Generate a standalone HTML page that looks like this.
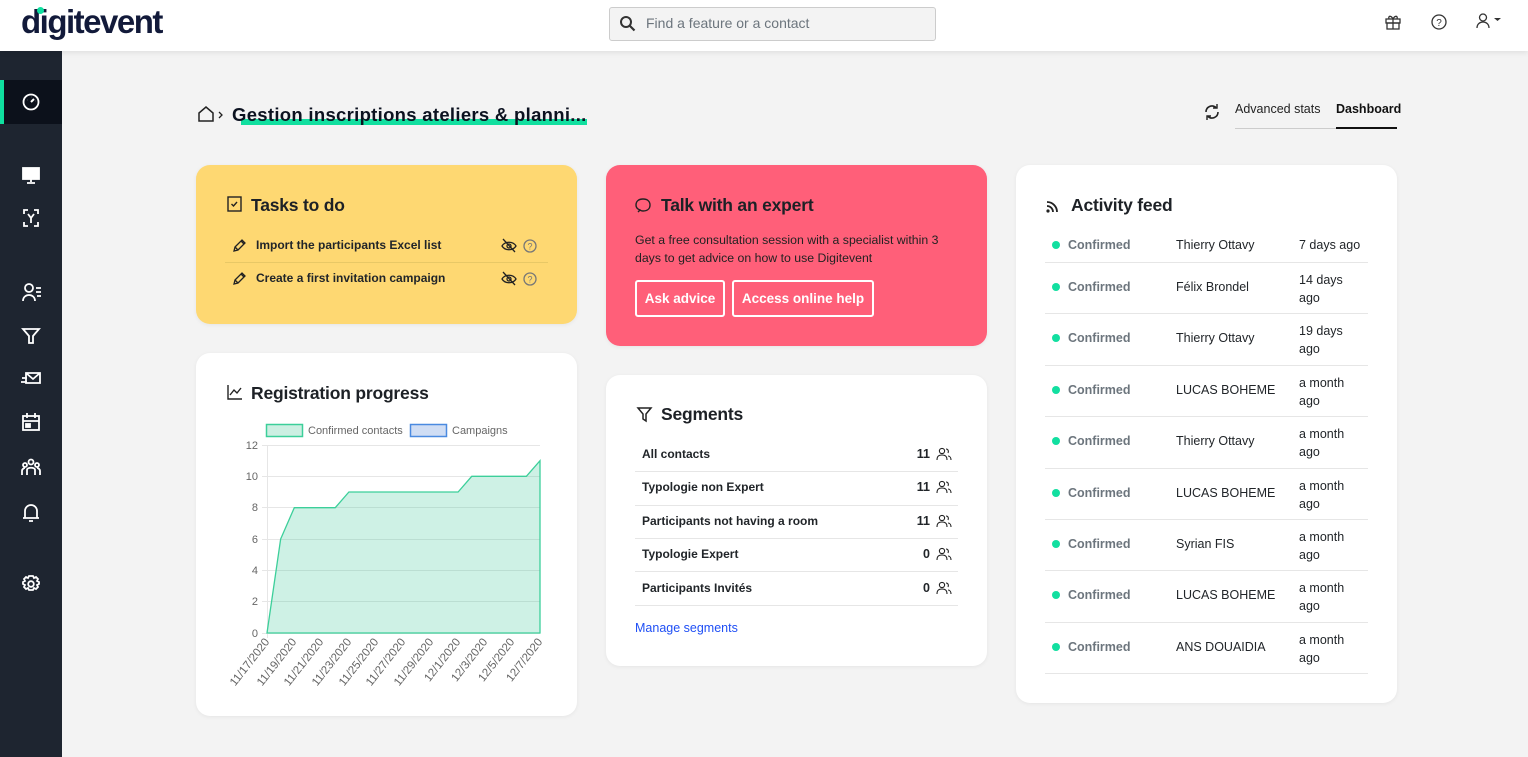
<!DOCTYPE html>
<html><head><meta charset="utf-8"><style>
*{box-sizing:border-box;margin:0;padding:0}
body{width:1528px;height:757px;background:#f3f3f3;font-family:"Liberation Sans",sans-serif;color:#212529;position:relative;overflow:hidden}
.a{position:absolute}
.top{left:0;top:0;width:1528px;height:51px;background:#fff;box-shadow:0 2px 5px rgba(0,0,0,.08);z-index:2}
.side{left:0;top:51px;width:62px;height:706px;background:#1e2530}
.card{position:absolute;border-radius:14px;background:#fff;box-shadow:0 1px 4px rgba(0,0,0,.06)}
h3{position:absolute;font-size:17.5px;font-weight:bold;color:#1d2126;letter-spacing:-0.2px}
.si{stroke:#fff;fill:none;stroke-width:1.8}
.row{position:absolute;font-size:12.5px;font-weight:bold}
.sep{position:absolute;height:1px;background:#e6e6e6}
.btn{position:absolute;border:2px solid #fff;border-radius:3px;color:#fff;font-weight:bold;font-size:13.5px;text-align:center;line-height:33px;height:37px}
.af{position:absolute;font-size:12.5px}
</style></head><body>
<div class="a top">
 <div class="a" style="left:21px;top:3px;font-size:33px;font-weight:bold;color:#121a3a;letter-spacing:-1.5px">digitevent</div>
 <div class="a" style="left:37px;top:7px;width:7px;height:7px;border-radius:4px;background:#0fe0a0"></div>
 <div class="a" style="left:609px;top:7px;width:327px;height:34px;border:1px solid #ccc;border-radius:3px;background:#f3f3f3"></div>
 <svg class="a" style="left:619px;top:15px" width="18" height="18"><circle cx="7" cy="7" r="5" stroke="#333" stroke-width="2" fill="none"/><path d="M11 11l4.5 4.5" stroke="#333" stroke-width="2.2"/></svg>
 <div class="a" style="left:646px;top:15px;font-size:14px;color:#6c757d">Find a feature or a contact</div>
 <svg class="a" style="left:1384px;top:13px" width="18" height="18"><g stroke="#333" fill="none" stroke-width="1.3"><rect x="2" y="6" width="14" height="4"/><rect x="3" y="10" width="12" height="6"/><path d="M9 6v10M9 6C7 2 4 3 5 5.5M9 6c2-4 5-3 4-0.5"/></g></svg>
 <svg class="a" style="left:1430px;top:13px" width="18" height="18"><circle cx="9" cy="9" r="7" stroke="#333" stroke-width="1.3" fill="none"/><text x="9" y="13" font-size="10" text-anchor="middle" fill="#333" font-family="Liberation Sans">?</text></svg>
 <svg class="a" style="left:1474px;top:12px" width="30" height="18"><g stroke="#333" fill="none" stroke-width="1.3"><circle cx="9" cy="5.5" r="3.5"/><path d="M3 16c0-4 3-6 6-6s6 2 6 6"/></g><path d="M20 6h7l-3.5 3z" fill="#333"/></svg>
</div>
<div class="a side"></div>
<div class="a" style="left:0;top:80px;width:62px;height:44px;background:#0c111b"></div>
<div class="a" style="left:0;top:80px;width:4px;height:44px;background:#0fe0a0"></div>
<svg class="a" style="left:0;top:51px" width="62" height="706">
 <g class="si"><circle cx="31" cy="51" r="7.5"/><path d="M31 51l3-3M27 49h0.1M31 46h0.1M35 50h0.1" stroke-width="2"/>
 <rect x="23" y="117" width="16" height="11" fill="#fff"/><path d="M31 128v3M27 132h8"/>
 <path d="M24 163v-4h4M34 159h4v4M24 171v4h4M34 175h4v-4M28 163l3 4 3-4M31 167v5"/>
 <circle cx="29" cy="237" r="4"/><path d="M23 250c0-4 3-6 6-6s6 2 6 6M36 237h5M36 241h5M37 245h4"/>
 <path d="M23 278h16l-6 7v7h-4v-7z"/>
 <path d="M26 322h14v10H26zM26 322l7 6 7-6M22 327h5M21 331h6"/>
 <rect x="23" y="365" width="16" height="14"/><path d="M23 370h16M27 362v5M35 362v5"/><rect x="26" y="373" width="4" height="3" fill="#fff"/>
 <circle cx="31" cy="411" r="2.5"/><circle cx="25" cy="414" r="2"/><circle cx="37" cy="414" r="2"/><path d="M27 424v-5c0-3 8-3 8 0v5M22 424v-4c0-2 2-3 3-3M40 424v-4c0-2-2-3-3-3"/>
 <path d="M25 467v-7a6 6 0 0112 0v7zM23 467h16M29 470h4"/>
 <circle cx="31" cy="533" r="2.8"/><path d="M31 525l2 0 1 2 2-1 2 2-1 2 2 1v2l-2 1 1 2-2 2-2-1-1 2h-4l-1-2-2 1-2-2 1-2-2-1v-2l2-1-1-2 2-2 2 1 1-2z"/></g>
</svg>

<svg class="a" style="left:197px;top:105px" width="30" height="18"><path d="M2 16V8l7-6 7 6v8z" stroke="#222" stroke-width="1.5" fill="none"/><path d="M22 7l3 3-3 3" stroke="#222" stroke-width="1.3" fill="none"/></svg>
<div class="a" style="left:241px;top:119px;width:346px;height:6px;background:#11df9f"></div>
<div class="a" style="left:232px;top:104px;font-size:18.5px;font-weight:bold;color:#0c1220;letter-spacing:0.3px">Gestion inscriptions ateliers &amp; planni...</div>
<svg class="a" style="left:1203px;top:103px" width="18" height="18"><path d="M3 9a6 6 0 0110-4.5M15 9a6 6 0 01-10 4.5" stroke="#222" stroke-width="1.6" fill="none"/><path d="M14 1v4h-4M4 17v-4h4" stroke="#222" stroke-width="1.4" fill="none"/></svg>
<div class="a" style="left:1235px;top:102px;font-size:12.5px;color:#222">Advanced stats</div>
<div class="a" style="left:1336px;top:102px;font-size:12.5px;font-weight:bold;color:#111">Dashboard</div>
<div class="a" style="left:1235px;top:128px;width:101px;height:1px;background:#ccc"></div>
<div class="a" style="left:1336px;top:127px;width:61px;height:2px;background:#111"></div>

<div class="card" style="left:196px;top:165px;width:381px;height:159px;background:#fed872"></div>
<svg class="a" style="left:226px;top:195px" width="18" height="18"><rect x="2" y="2" width="13" height="14" stroke="#222" stroke-width="1.4" fill="none"/><path d="M5.5 9l2 2 3.5-4" stroke="#222" stroke-width="1.4" fill="none"/></svg>
<h3 style="left:251px;top:195px">Tasks to do</h3>
<svg class="a" style="left:232px;top:237px" width="16" height="16"><path d="M2 14l1-4 7-7 3 3-7 7zM9 4l3 3M3 10l3 3" stroke="#222" stroke-width="1.3" fill="none"/></svg>
<div class="row" style="left:256px;top:238px;font-size:12px">Import the participants Excel list</div>
<div class="sep" style="left:225px;top:262px;width:323px;background:#e8c866"></div>
<svg class="a" style="left:232px;top:270px" width="16" height="16"><path d="M2 14l1-4 7-7 3 3-7 7zM9 4l3 3M3 10l3 3" stroke="#222" stroke-width="1.3" fill="none"/></svg>
<div class="row" style="left:256px;top:271px;font-size:12px">Create a first invitation campaign</div>
<svg class="a" style="left:500px;top:237px" width="44" height="50"><g fill="none" stroke-width="1.3"><path d="M2 9c3-5 11-5 14 0-3 5-11 5-14 0zM3 2l12 13" stroke="#222"/><circle cx="9" cy="9" r="2" stroke="#222"/><circle cx="30" cy="9" r="6" stroke="#777"/>
<path d="M2 42c3-5 11-5 14 0-3 5-11 5-14 0zM3 35l12 13" stroke="#222"/><circle cx="9" cy="42" r="2" stroke="#222"/><circle cx="30" cy="42" r="6" stroke="#777"/></g>
<text x="30" y="12.5" font-size="9" text-anchor="middle" fill="#777" font-family="Liberation Sans">?</text><text x="30" y="45.5" font-size="9" text-anchor="middle" fill="#777" font-family="Liberation Sans">?</text></svg>

<div class="card" style="left:606px;top:165px;width:381px;height:181px;background:#ff5f79"></div>
<svg class="a" style="left:635px;top:196px" width="18" height="18"><path d="M5 14c-3-1-4-3-4-5 0-4 3-6 7-6s7 2 7 6-3 6-7 6c-1 0-2 0-3-1l-2 2z" stroke="#222" stroke-width="1.4" fill="none"/></svg>
<h3 style="left:661px;top:195px">Talk with an expert</h3>
<div class="a" style="left:635px;top:231px;font-size:12.3px;line-height:18px;color:#222;width:325px">Get a free consultation session with a specialist within 3 days to get advice on how to use Digitevent</div>
<div class="btn" style="left:635px;top:280px;width:90px">Ask advice</div>
<div class="btn" style="left:732px;top:280px;width:142px">Access online help</div>

<div class="card" style="left:606px;top:375px;width:381px;height:291px"></div>
<svg class="a" style="left:636px;top:405px" width="18" height="18"><path d="M2 3h13l-5 6v7l-3-2V9z" stroke="#222" stroke-width="1.5" fill="none"/></svg>
<h3 style="left:661px;top:404px">Segments</h3>
<div class="row" style="left:642px;top:447px;font-size:12px">All contacts</div>
<div class="row" style="left:642px;top:480px;font-size:12px">Typologie non Expert</div>
<div class="row" style="left:642px;top:514px;font-size:12px">Participants not having a room</div>
<div class="row" style="left:642px;top:547px;font-size:12px">Typologie Expert</div>
<div class="row" style="left:642px;top:581px;font-size:12px">Participants Invités</div>
<div class="row" style="left:900px;top:447px;width:30px;text-align:right">11</div>
<div class="row" style="left:900px;top:480px;width:30px;text-align:right">11</div>
<div class="row" style="left:900px;top:514px;width:30px;text-align:right">11</div>
<div class="row" style="left:900px;top:547px;width:30px;text-align:right">0</div>
<div class="row" style="left:900px;top:581px;width:30px;text-align:right">0</div>
<svg class="a" style="left:936px;top:446px" width="16" height="150"><g stroke="#222" stroke-width="1.1" fill="none">
<circle cx="6" cy="5" r="2.6"/><path d="M1 14c0-4 2-5 5-5s5 1 5 5M10 3c2 0 3 2 2 4M12 10c2 0 3 2 3 4"/>
<g transform="translate(0,33)"><circle cx="6" cy="5" r="2.6"/><path d="M1 14c0-4 2-5 5-5s5 1 5 5M10 3c2 0 3 2 2 4M12 10c2 0 3 2 3 4"/></g>
<g transform="translate(0,67)"><circle cx="6" cy="5" r="2.6"/><path d="M1 14c0-4 2-5 5-5s5 1 5 5M10 3c2 0 3 2 2 4M12 10c2 0 3 2 3 4"/></g>
<g transform="translate(0,100)"><circle cx="6" cy="5" r="2.6"/><path d="M1 14c0-4 2-5 5-5s5 1 5 5M10 3c2 0 3 2 2 4M12 10c2 0 3 2 3 4"/></g>
<g transform="translate(0,134)"><circle cx="6" cy="5" r="2.6"/><path d="M1 14c0-4 2-5 5-5s5 1 5 5M10 3c2 0 3 2 2 4M12 10c2 0 3 2 3 4"/></g></g></svg>
<div class="sep" style="left:635px;top:471px;width:323px"></div>
<div class="sep" style="left:635px;top:505px;width:323px"></div>
<div class="sep" style="left:635px;top:538px;width:323px"></div>
<div class="sep" style="left:635px;top:571px;width:323px"></div>
<div class="sep" style="left:635px;top:605px;width:323px"></div>
<div class="a" style="left:635px;top:621px;font-size:12.5px;color:#1f4ff5">Manage segments</div>

<div class="card" style="left:196px;top:353px;width:381px;height:363px"></div>
<svg class="a" style="left:226px;top:383px" width="18" height="18"><path d="M2 2v14h14M4 12l4-5 3 3 4-5" stroke="#222" stroke-width="1.4" fill="none"/></svg>
<h3 style="left:251px;top:383px">Registration progress</h3>
<svg class="a" style="left:0;top:0" width="600" height="700" font-family="Liberation Sans">
 <rect x="266.5" y="424.5" width="36" height="12" fill="#ccefe2" stroke="#3ccf9a" stroke-width="1.5"/>
 <text x="308" y="434" font-size="11" fill="#666">Confirmed contacts</text>
 <rect x="410.5" y="424.5" width="36" height="12" fill="#cfddf4" stroke="#4a8ae0" stroke-width="1.5"/>
 <text x="452" y="434" font-size="11" fill="#666">Campaigns</text>
 <g stroke="#e6e6e6"><path d="M262 445.5H540M262 476.5H540M262 507.5H540M262 539.5H540M262 570.5H540M262 601.5H540M262 633.5H540M267.5 445V638"/></g>
 <g font-size="11" fill="#666" text-anchor="end"><text x="258" y="449">12</text><text x="258" y="480">10</text><text x="258" y="511">8</text><text x="258" y="543">6</text><text x="258" y="574">4</text><text x="258" y="605">2</text><text x="258" y="637">0</text></g>
 <path d="M267 633L280.65 539L294.3 507.7L335.25 507.7L348.9 492L458.1 492L471.75 476.3L526.35 476.3L540 460.7V633Z" fill="rgba(60,200,150,0.25)" stroke="#3ccf9a" stroke-width="1.3"/>
 <g font-size="11.5" fill="#666" text-anchor="end">
 <text transform="translate(270,642) rotate(-52)">11/17/2020</text>
 <text transform="translate(297,642) rotate(-52)">11/19/2020</text>
 <text transform="translate(324,642) rotate(-52)">11/21/2020</text>
 <text transform="translate(352,642) rotate(-52)">11/23/2020</text>
 <text transform="translate(379,642) rotate(-52)">11/25/2020</text>
 <text transform="translate(406,642) rotate(-52)">11/27/2020</text>
 <text transform="translate(434,642) rotate(-52)">11/29/2020</text>
 <text transform="translate(461,642) rotate(-52)">12/1/2020</text>
 <text transform="translate(488,642) rotate(-52)">12/3/2020</text>
 <text transform="translate(515,642) rotate(-52)">12/5/2020</text>
 <text transform="translate(543,642) rotate(-52)">12/7/2020</text></g>
</svg>

<div class="card" style="left:1016px;top:165px;width:381px;height:538px"></div>
<svg class="a" style="left:1045px;top:196px" width="18" height="18"><g stroke="#222" stroke-width="1.8" fill="none"><path d="M2 6a10 10 0 0110 10M2 10a6 6 0 016 6"/></g><circle cx="3" cy="15" r="1.6" fill="#222"/></svg>
<h3 style="left:1071px;top:195px">Activity feed</h3>
<div class="sep" style="left:1045px;top:262px;width:323px"></div>
<div class="sep" style="left:1045px;top:313px;width:323px"></div>
<div class="sep" style="left:1045px;top:365px;width:323px"></div>
<div class="sep" style="left:1045px;top:416px;width:323px"></div>
<div class="sep" style="left:1045px;top:468px;width:323px"></div>
<div class="sep" style="left:1045px;top:519px;width:323px"></div>
<div class="sep" style="left:1045px;top:570px;width:323px"></div>
<div class="sep" style="left:1045px;top:622px;width:323px"></div>
<div class="sep" style="left:1045px;top:673px;width:323px"></div>

<div class="a" style="left:1052px;top:241px;width:8px;height:8px;border-radius:4px;background:#12dfa0"></div><div class="af" style="left:1068px;top:238px;font-weight:bold;color:#6c757d">Confirmed</div><div class="af" style="left:1176px;top:238px">Thierry Ottavy</div><div class="af" style="left:1299px;top:238px">7 days ago</div>
<div class="a" style="left:1052px;top:283px;width:8px;height:8px;border-radius:4px;background:#12dfa0"></div><div class="af" style="left:1068px;top:280px;font-weight:bold;color:#6c757d">Confirmed</div><div class="af" style="left:1176px;top:280px">Félix Brondel</div><div class="af" style="left:1299px;top:271px;line-height:18px">14 days<br>ago</div>
<div class="a" style="left:1052px;top:334px;width:8px;height:8px;border-radius:4px;background:#12dfa0"></div><div class="af" style="left:1068px;top:331px;font-weight:bold;color:#6c757d">Confirmed</div><div class="af" style="left:1176px;top:331px">Thierry Ottavy</div><div class="af" style="left:1299px;top:322px;line-height:18px">19 days<br>ago</div>
<div class="a" style="left:1052px;top:386px;width:8px;height:8px;border-radius:4px;background:#12dfa0"></div><div class="af" style="left:1068px;top:383px;font-weight:bold;color:#6c757d">Confirmed</div><div class="af" style="left:1176px;top:383px">LUCAS BOHEME</div><div class="af" style="left:1299px;top:374px;line-height:18px">a month<br>ago</div>
<div class="a" style="left:1052px;top:437px;width:8px;height:8px;border-radius:4px;background:#12dfa0"></div><div class="af" style="left:1068px;top:434px;font-weight:bold;color:#6c757d">Confirmed</div><div class="af" style="left:1176px;top:434px">Thierry Ottavy</div><div class="af" style="left:1299px;top:425px;line-height:18px">a month<br>ago</div>
<div class="a" style="left:1052px;top:489px;width:8px;height:8px;border-radius:4px;background:#12dfa0"></div><div class="af" style="left:1068px;top:486px;font-weight:bold;color:#6c757d">Confirmed</div><div class="af" style="left:1176px;top:486px">LUCAS BOHEME</div><div class="af" style="left:1299px;top:477px;line-height:18px">a month<br>ago</div>
<div class="a" style="left:1052px;top:540px;width:8px;height:8px;border-radius:4px;background:#12dfa0"></div><div class="af" style="left:1068px;top:537px;font-weight:bold;color:#6c757d">Confirmed</div><div class="af" style="left:1176px;top:537px">Syrian FIS</div><div class="af" style="left:1299px;top:528px;line-height:18px">a month<br>ago</div>
<div class="a" style="left:1052px;top:591px;width:8px;height:8px;border-radius:4px;background:#12dfa0"></div><div class="af" style="left:1068px;top:588px;font-weight:bold;color:#6c757d">Confirmed</div><div class="af" style="left:1176px;top:588px">LUCAS BOHEME</div><div class="af" style="left:1299px;top:579px;line-height:18px">a month<br>ago</div>
<div class="a" style="left:1052px;top:643px;width:8px;height:8px;border-radius:4px;background:#12dfa0"></div><div class="af" style="left:1068px;top:640px;font-weight:bold;color:#6c757d">Confirmed</div><div class="af" style="left:1176px;top:640px">ANS DOUAIDIA</div><div class="af" style="left:1299px;top:631px;line-height:18px">a month<br>ago</div>
</body></html>
